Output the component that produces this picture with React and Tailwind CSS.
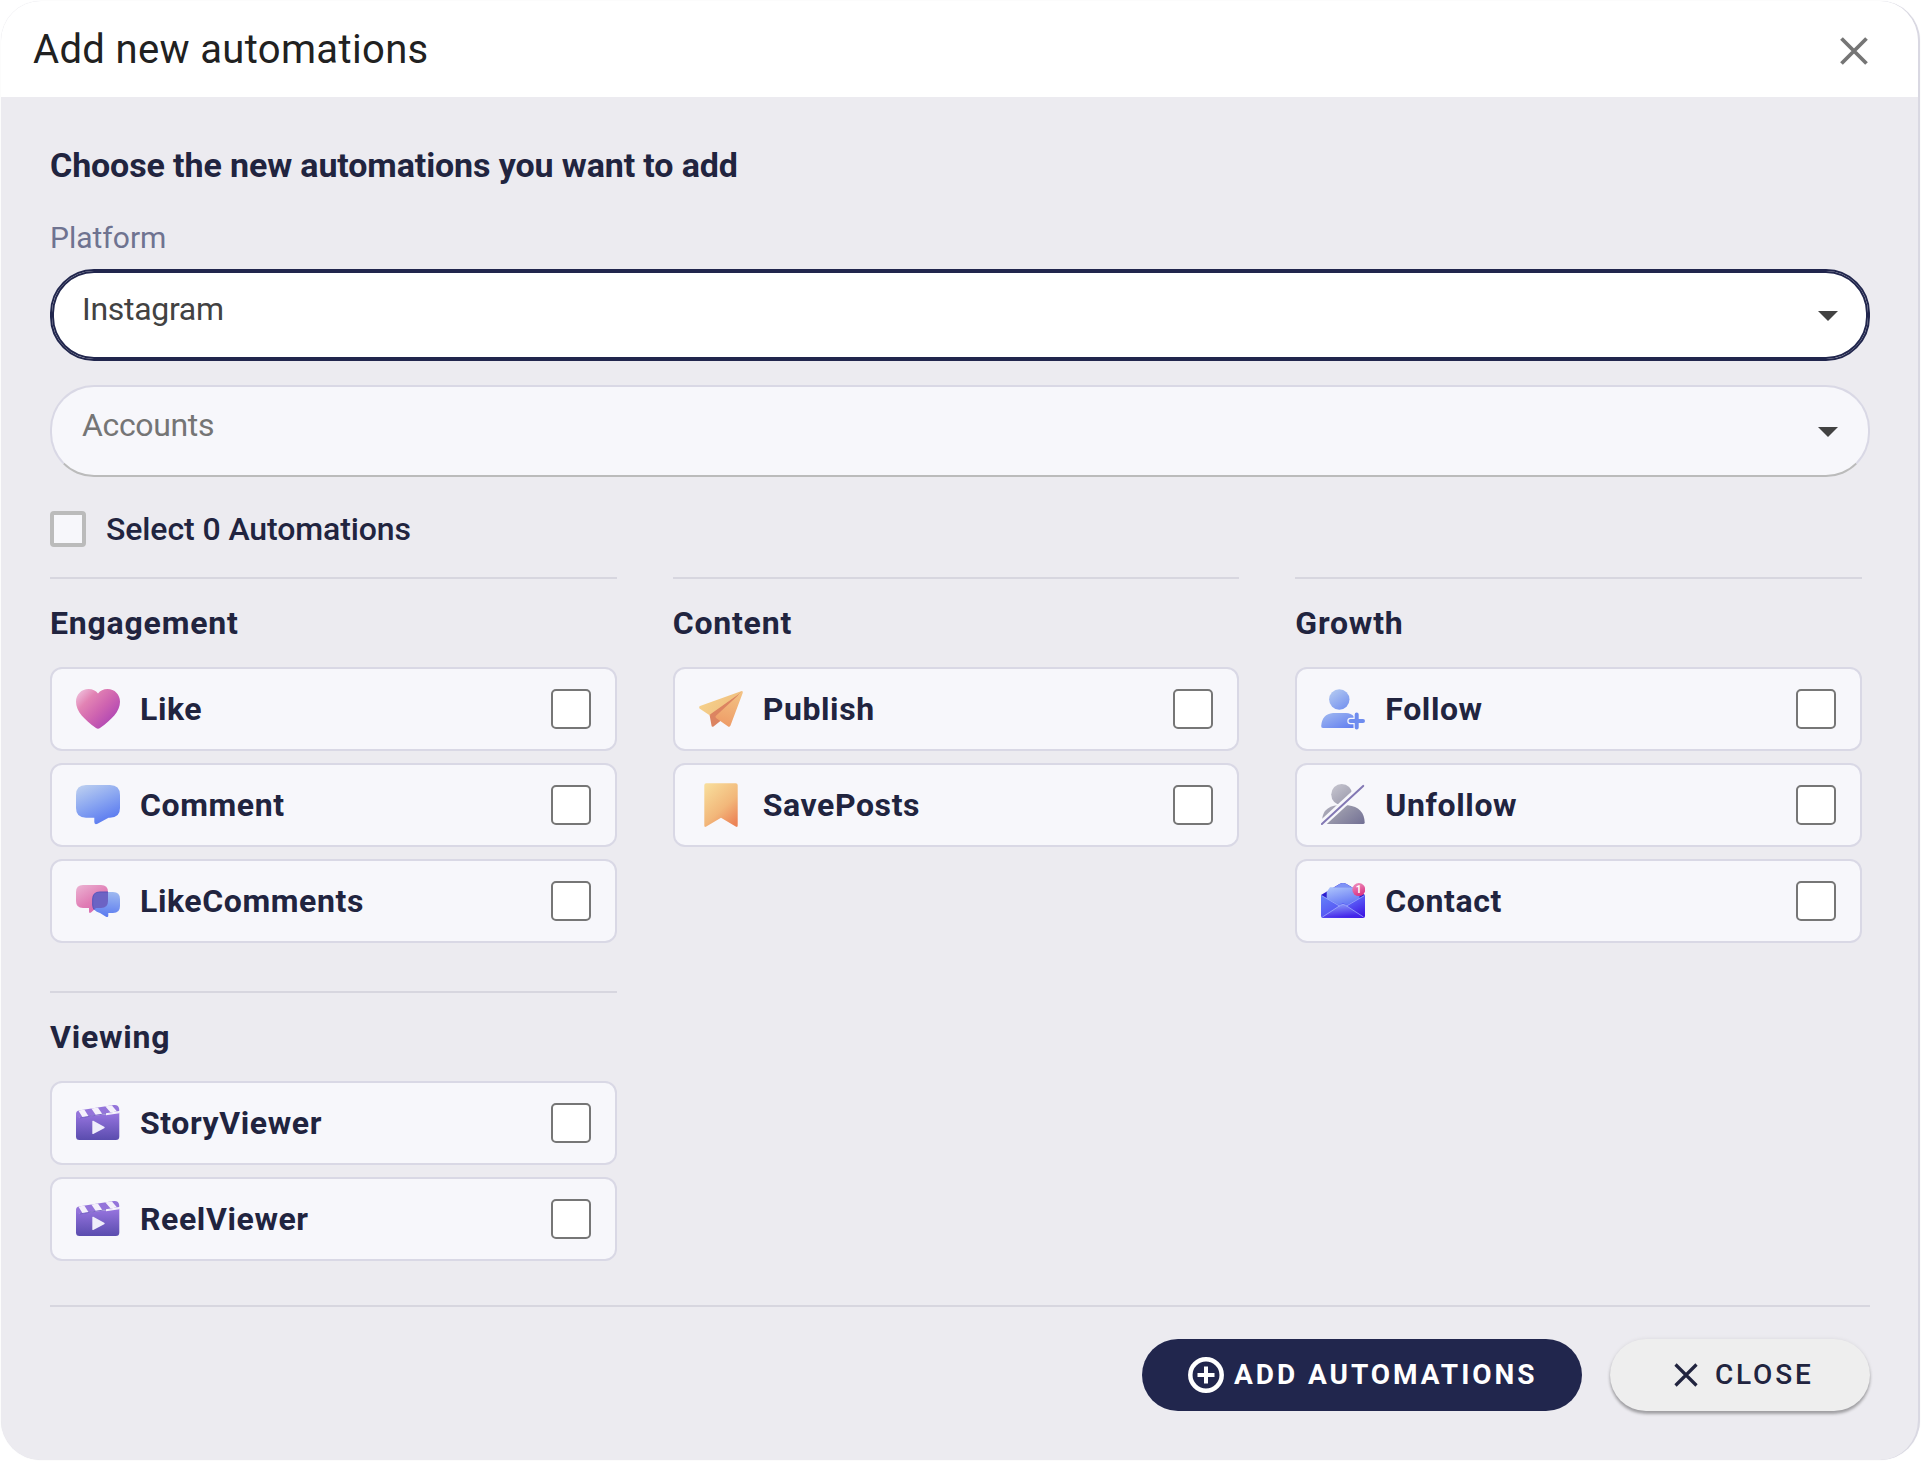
import { useState } from "react";

function HeartIcon() {
  return (
    <svg viewBox="0 0 44 44" className="size-11 shrink-0">
      <defs>
        <linearGradient id="heart" x1="0.05" y1="0.05" x2="0.9" y2="0.8">
          <stop offset="0" stopColor="#efc0dc" />
          <stop offset="0.28" stopColor="#e283b4" />
          <stop offset="0.6" stopColor="#cf64b0" />
          <stop offset="1" stopColor="#ad44b4" />
        </linearGradient>
      </defs>
      <path
        d="M22 6.6C24.2 3.600 27.400 2 31.500 2C38.600 2 44 7.500 44 14.700C44 24.500 35.500 32.500 24 41C22.700 42 21.300 42 20 41C8.500 32.500 0 24.500 0 14.700C0 7.500 5.400 2 12.500 2C16.600 2 19.800 3.600 22 6.600Z"
        fill="url(#heart)"
      />
    </svg>
  );
}

function CommentIcon() {
  return (
    <svg viewBox="0 0 44 44" className="size-11 shrink-0">
      <defs>
        <linearGradient id="bubble" x1="0.1" y1="0" x2="0.6" y2="1">
          <stop offset="0" stopColor="#bccff0" />
          <stop offset="0.5" stopColor="#8aa6f1" />
          <stop offset="1" stopColor="#5a7af0" />
        </linearGradient>
      </defs>
      <path
        d="M10 2H34Q44 2 44 12V25Q44 34.700 34 34.700H32.500L21.500 40.800Q18.300 42 18.300 39V34.700H10Q0 34.700 0 25V12Q0 2 10 2Z"
        fill="url(#bubble)"
      />
    </svg>
  );
}

function LikeCommentsIcon() {
  return (
    <svg viewBox="0 0 44 44" className="size-11 shrink-0">
      <defs>
        <linearGradient id="pinkBubble" x1="0" y1="0" x2="0.7" y2="1">
          <stop offset="0" stopColor="#ecb4d3" />
          <stop offset="0.6" stopColor="#e07db5" />
          <stop offset="1" stopColor="#d866ad" />
        </linearGradient>
        <linearGradient id="blueBubble" x1="0.6" y1="0" x2="0.5" y2="1">
          <stop offset="0" stopColor="#9db8f0" />
          <stop offset="1" stopColor="#5a7af0" />
        </linearGradient>
        <clipPath id="pinkClip">
          <path d="M7 6H25Q32 6 32 13V22Q32 29 25 29H20L15 33.500Q13 34.800 13 32.500V29H7Q0 29 0 22V13Q0 6 7 6Z" />
        </clipPath>
      </defs>
      <path
        d="M7 6H25Q32 6 32 13V22Q32 29 25 29H20L15 33.500Q13 34.800 13 32.500V29H7Q0 29 0 22V13Q0 6 7 6Z"
        fill="url(#pinkBubble)"
      />
      <path
        d="M24 13H37Q44 13 44 20V27Q44 34 37 34H32.300V36.500Q32.300 38.800 30 37.800L24 34Q16.700 32 16.700 26V20Q16.700 13 24 13Z"
        fill="url(#blueBubble)"
      />
      <path
        d="M24 13H37Q44 13 44 20V27Q44 34 37 34H32.300V36.500Q32.300 38.800 30 37.800L24 34Q16.700 32 16.700 26V20Q16.700 13 24 13Z"
        fill="#6c63c4"
        stroke="#5953b8"
        strokeWidth="1"
        clipPath="url(#pinkClip)"
      />
    </svg>
  );
}

function PublishIcon() {
  return (
    <svg viewBox="0 0 44 44" className="size-11 shrink-0">
      <defs>
        <linearGradient id="wingLeft" x1="0" y1="0" x2="1" y2="0.4">
          <stop offset="0" stopColor="#f6d58e" />
          <stop offset="1" stopColor="#f0bd7d" />
        </linearGradient>
        <linearGradient id="wingRight" x1="0.7" y1="0" x2="0.5" y2="1">
          <stop offset="0" stopColor="#f3c283" />
          <stop offset="1" stopColor="#ee9c67" />
        </linearGradient>
      </defs>
      <path d="M10.500 27.500L38 8L41 9L17 30L22 33.500L14.500 39.500Q12.800 40.500 12.500 38.500Z" fill="#dc8461" />
      <path d="M1 19L42 4.200Q44.200 3.700 43.500 5L11 28.500L0.500 21.500Q-0.300 19.700 1 19Z" fill="url(#wingLeft)" />
      <path d="M40 7L43.500 4.500L19 27L13 31L11 27.500Z" fill="#dc8461" />
      <path d="M43.900 5.500L31.500 38.500Q30.500 40.500 28.800 39.200L17 31Q15.800 29.800 17 28.700L43 4.800Z" fill="url(#wingRight)" />
    </svg>
  );
}

function SavePostsIcon() {
  return (
    <svg viewBox="0 0 44 44" className="size-11 shrink-0">
      <defs>
        <linearGradient id="bookmark" x1="0.1" y1="0" x2="0.8" y2="1">
          <stop offset="0" stopColor="#f8dd9b" />
          <stop offset="0.6" stopColor="#f2b77a" />
          <stop offset="1" stopColor="#ec8457" />
        </linearGradient>
      </defs>
      <path
        d="M7.300 0.200H36.700Q38.700 0.200 38.700 2.200V42.500Q38.700 44.700 36.700 43.500L22 34.700L7.300 43.500Q5.300 44.700 5.300 42.500V2.200Q5.300 0.200 7.300 0.200Z"
        fill="url(#bookmark)"
      />
    </svg>
  );
}

function FollowIcon() {
  return (
    <svg viewBox="0 0 44 44" className="size-11 shrink-0">
      <defs>
        <linearGradient id="followHead" x1="0.1" y1="0" x2="0.8" y2="1">
          <stop offset="0" stopColor="#b5cbf1" />
          <stop offset="1" stopColor="#7592ef" />
        </linearGradient>
        <linearGradient id="followBody" x1="0" y1="0" x2="1" y2="1">
          <stop offset="0" stopColor="#a3bbf0" />
          <stop offset="1" stopColor="#5f7cf0" />
        </linearGradient>
      </defs>
      <circle cx="18.300" cy="12.500" r="10.200" fill="url(#followHead)" />
      <path d="M12 26H25Q30 26 33 29.500V41H2Q0 41 0.200 39Q1 27 12 26Z" fill="url(#followBody)" />
      <path d="M35.700 27.500V40.500M29.500 34H42" stroke="#f7f7fb" strokeWidth="6.400" strokeLinecap="round" />
      <path d="M35.700 27.500V40.500M29.500 34H42" stroke="#6e8cef" strokeWidth="4" strokeLinecap="round" />
    </svg>
  );
}

function UnfollowIcon() {
  return (
    <svg viewBox="0 0 44 44" className="size-11 shrink-0">
      <defs>
        <linearGradient id="unfollow" gradientUnits="userSpaceOnUse" x1="10" y1="3" x2="40" y2="42">
          <stop offset="0" stopColor="#c6c5cf" />
          <stop offset="0.5" stopColor="#9b9aac" />
          <stop offset="1" stopColor="#747295" />
        </linearGradient>
      </defs>
      <circle cx="20.700" cy="11.500" r="10.500" fill="url(#unfollow)" />
      <path d="M1 41Q0 23.500 17 22.300H27Q43 24 43.700 39.500Q43.700 41 42 41Z" fill="url(#unfollow)" />
      <path d="M-1 42.500L44 1" stroke="#f7f7fb" strokeWidth="7" />
      <path d="M0.900 41L42.200 2.900" stroke="#8378b4" strokeWidth="2" strokeLinecap="round" />
    </svg>
  );
}

function ContactIcon() {
  return (
    <svg viewBox="0 0 44 44" className="size-11 shrink-0">
      <defs>
        <linearGradient id="letter" x1="0.2" y1="0" x2="0.6" y2="1">
          <stop offset="0" stopColor="#a9c0fb" />
          <stop offset="1" stopColor="#5a6cf3" />
        </linearGradient>
        <linearGradient id="envelope" x1="0" y1="0" x2="1" y2="1">
          <stop offset="0" stopColor="#6684f8" />
          <stop offset="0.55" stopColor="#5654f4" />
          <stop offset="1" stopColor="#3a0be0" />
        </linearGradient>
        <linearGradient id="flap" x1="0" y1="0" x2="0.4" y2="1">
          <stop offset="0" stopColor="#93a9fb" />
          <stop offset="1" stopColor="#4426ea" />
        </linearGradient>
        <linearGradient id="badge" x1="0.2" y1="0" x2="0.6" y2="1">
          <stop offset="0" stopColor="#ee8fbb" />
          <stop offset="1" stopColor="#d92f82" />
        </linearGradient>
      </defs>
      <path d="M0 16L18.500 5Q22 3 25.500 5L44 16V24H0Z" fill="#2d1fcf" />
      <path d="M13 8.500L18.500 5Q22 3 25.500 5L31 8.500Z" fill="#7e92f6" />
      <path d="M9 8.300H36Q38.500 8.300 38.500 11V22L22 29L5.700 20V13Z" fill="url(#letter)" />
      <path d="M0 16L18 26L22 24L26 26L44 16V37Q44 39 42 39H2Q0 39 0 37Z" fill="url(#envelope)" />
      <path d="M1 38.500L19.500 26.200Q22 24.600 24.500 26.200L43 38.500Z" fill="url(#flap)" />
      <path d="M0.500 16.500L18.500 27M43.500 16.500L25.500 27M1.500 38L19.500 26.200Q22 24.600 24.500 26.200L42.500 38" fill="none" stroke="#a9b8ff" strokeWidth="0.700" />
      <circle cx="37.800" cy="10.600" r="6.500" fill="url(#badge)" />
      <text x="37.600" y="14.200" textAnchor="middle" fill="#ffffff" className="font-[Roboto] text-[10px] font-bold">
        1
      </text>
    </svg>
  );
}

function ViewerIcon({ id }) {
  return (
    <svg viewBox="0 0 44 44" className="size-11 shrink-0">
      <defs>
        <linearGradient id={id} x1="0" y1="0" x2="0" y2="1">
          <stop offset="0" stopColor="#9875e0" />
          <stop offset="1" stopColor="#5a4cae" />
        </linearGradient>
        <clipPath id={id + "Bar"}>
          <path d="M2.500 9.500L38 4Q42.500 3.500 43.200 8V10L4 16.700Q0 16.500 0 13Q0 10 2.500 9.500Z" />
        </clipPath>
      </defs>
      <path d="M0 13L4 16.700L30 13.300L43.300 11.500V35.500Q43.300 39 39.800 39H3.500Q0 39 0 35.500Z" fill={`url(#${id})`} />
      <g clipPath={`url(#${id}Bar)`}>
        <path d="M0 2H44V18H0Z" fill="#9474da" />
        <path d="M2 9L8 8L13 16L7 17ZM15 7L21.500 6L27 14L20.500 15ZM29 5L35.500 4L41.500 11L35 12Z" fill="#f4f0fb" />
      </g>
      <path d="M4 16.900L30 12.600" stroke="#6650bb" strokeWidth="0.800" />
      <path d="M30 13L43.300 11V12.300L30 14.200Z" fill="#f4f0fb" />
      <path d="M17.300 19.800L28.200 25.800Q29.400 26.500 28.200 27.200L17.300 33Q16.300 33.300 16.300 32.200V20.500Q16.300 19.300 17.300 19.800Z" fill="#efedfa" />
    </svg>
  );
}

const groups = [
  {
    title: "Engagement",
    items: [
      { name: "Like", icon: <HeartIcon /> },
      { name: "Comment", icon: <CommentIcon /> },
      { name: "LikeComments", icon: <LikeCommentsIcon /> },
    ],
  },
  {
    title: "Content",
    items: [
      { name: "Publish", icon: <PublishIcon /> },
      { name: "SavePosts", icon: <SavePostsIcon /> },
    ],
  },
  {
    title: "Growth",
    items: [
      { name: "Follow", icon: <FollowIcon /> },
      { name: "Unfollow", icon: <UnfollowIcon /> },
      { name: "Contact", icon: <ContactIcon /> },
    ],
  },
  {
    title: "Viewing",
    items: [
      { name: "StoryViewer", icon: <ViewerIcon id="story" /> },
      { name: "ReelViewer", icon: <ViewerIcon id="reel" /> },
    ],
  },
];

function Caret() {
  return (
    <svg viewBox="0 0 20 10" className="mt-0.5 h-2.5 w-5">
      <path d="M0 0H20L10 10Z" fill="#424242" />
    </svg>
  );
}

function AutomationCard({ item, checked, onToggle }) {
  return (
    <label className="flex h-[84px] items-center gap-5 rounded-xl border-2 border-[#d9d8e5] bg-[#f7f7fb] px-6">
      {item.icon}
      <span className="flex-1 text-[32px] leading-10 font-bold tracking-[0.6px]">{item.name}</span>
      <input
        type="checkbox"
        checked={checked}
        onChange={onToggle}
        className="size-10 appearance-none rounded-[5px] border-2 border-[#767676] bg-white checked:bg-[#21264d]"
      />
    </label>
  );
}

export default function App() {
  const [selected, setSelected] = useState([]);

  function toggle(name) {
    if (selected.includes(name)) {
      setSelected(selected.filter((item) => item !== name));
    } else {
      setSelected([...selected, name]);
    }
  }

  return (
    <div className="h-[1461px] w-[1921px] bg-white p-px font-[Roboto,sans-serif] text-[#21243f]">
      <div className="flex h-[1459px] w-[1919px] flex-col overflow-hidden rounded-[40px] border-r-2 border-[#d9d8e2] bg-[#ecebf0] shadow-[0_0_1px_#dcdce2]">

        {/* Header */}
        <div className="flex h-24 shrink-0 items-center justify-between bg-white pr-[50px] pl-8">
          <h1 className="mt-0.5 text-[40px] leading-[48px] font-normal tracking-[0.35px] text-[#212121]">
            Add new automations
          </h1>
          <button aria-label="Close dialog" className="mt-1">
            <svg viewBox="0 0 28 28" className="size-7">
              <path d="M1.500 1.500L26.500 26.500M26.500 1.500L1.500 26.500" stroke="#757575" strokeWidth="3.800" />
            </svg>
          </button>
        </div>

        {/* Body */}
        <div className="flex flex-col pr-[48px] pl-[49px]">
          <h2 className="mt-12 text-[34px] leading-10 font-bold tracking-[-0.12px]">
            Choose the new automations you want to add
          </h2>
          <span className="mt-[33px] text-[30px] leading-10 text-[#6f7390]">Platform</span>

          <button className="mt-[11px] flex h-[92px] items-center justify-between rounded-[44px] border-2 border-[#21264d] bg-white pr-[30px] pl-[30px] text-[#424242] shadow-[inset_0_0_0_2px_#21264d]">
            <span className="-mt-3 text-[32px] leading-10 tracking-[-0.3px]">Instagram</span>
            <Caret />
          </button>
          <button className="mt-6 flex h-[92px] items-center justify-between rounded-[44px] border-2 border-[#d9d8e5] border-b-[#bbbbbb] bg-[#f7f7fb] pr-[30px] pl-[30px] text-[#757575]">
            <span className="-mt-3 text-[32px] leading-10 tracking-[-0.35px]">Accounts</span>
            <Caret />
          </button>

          <label className="mt-[32px] flex h-10 items-center gap-5">
            <span className="size-9 rounded-[4px] border-4 border-[#bbbbbb] bg-[#f7f7fb]"></span>
            <span className="text-[32px] leading-10 font-medium tracking-[-0.1px]">Select {selected.length} Automations</span>
          </label>

          {/* Automation groups */}
          <div className="mt-7 grid w-[1812px] grid-cols-3 gap-x-14 gap-y-12">
            {groups.map((group) => (
              <section key={group.title} className="border-t-2 border-[#d7d6df]">
                <h3 className="mt-6 mb-6 text-[32px] leading-10 font-bold tracking-[0.8px]">{group.title}</h3>
                <div className="flex flex-col gap-3">
                  {group.items.map((item) => (
                    <AutomationCard
                      key={item.name}
                      item={item}
                      checked={selected.includes(item.name)}
                      onToggle={() => toggle(item.name)}
                    />
                  ))}
                </div>
              </section>
            ))}
          </div>

          {/* Actions */}
          <div className="mt-11 flex justify-end gap-7 border-t-2 border-[#d7d6df] pt-8">
            <button className="flex h-[72px] w-[440px] items-center rounded-full bg-[#21264d] pl-[46px] text-[28px] font-bold tracking-[2.95px] text-white">
              <svg viewBox="0 0 36 36" className="mr-2.5 size-9 shrink-0" fill="none" stroke="currentColor" strokeWidth="4.500">
                <circle cx="18" cy="18" r="15.700" />
                <path d="M18 9.500V26.500M9.500 18H26.500" strokeWidth="4" />
              </svg>
              ADD AUTOMATIONS
            </button>
            <button className="flex h-[72px] w-[260px] items-center rounded-full bg-[#eeeeee] pl-16 text-[28px] font-medium tracking-[2.8px] shadow-[0_3px_3px_rgba(0,0,0,0.3),0_0_4px_rgba(0,0,0,0.08)]">
              <svg viewBox="0 0 24 24" className="mr-[17px] size-6 shrink-0" stroke="currentColor" strokeWidth="3.200">
                <path d="M1.500 1.500L22.500 22.500M22.500 1.500L1.500 22.500" />
              </svg>
              CLOSE
            </button>
          </div>
        </div>

      </div>
    </div>
  );
}
